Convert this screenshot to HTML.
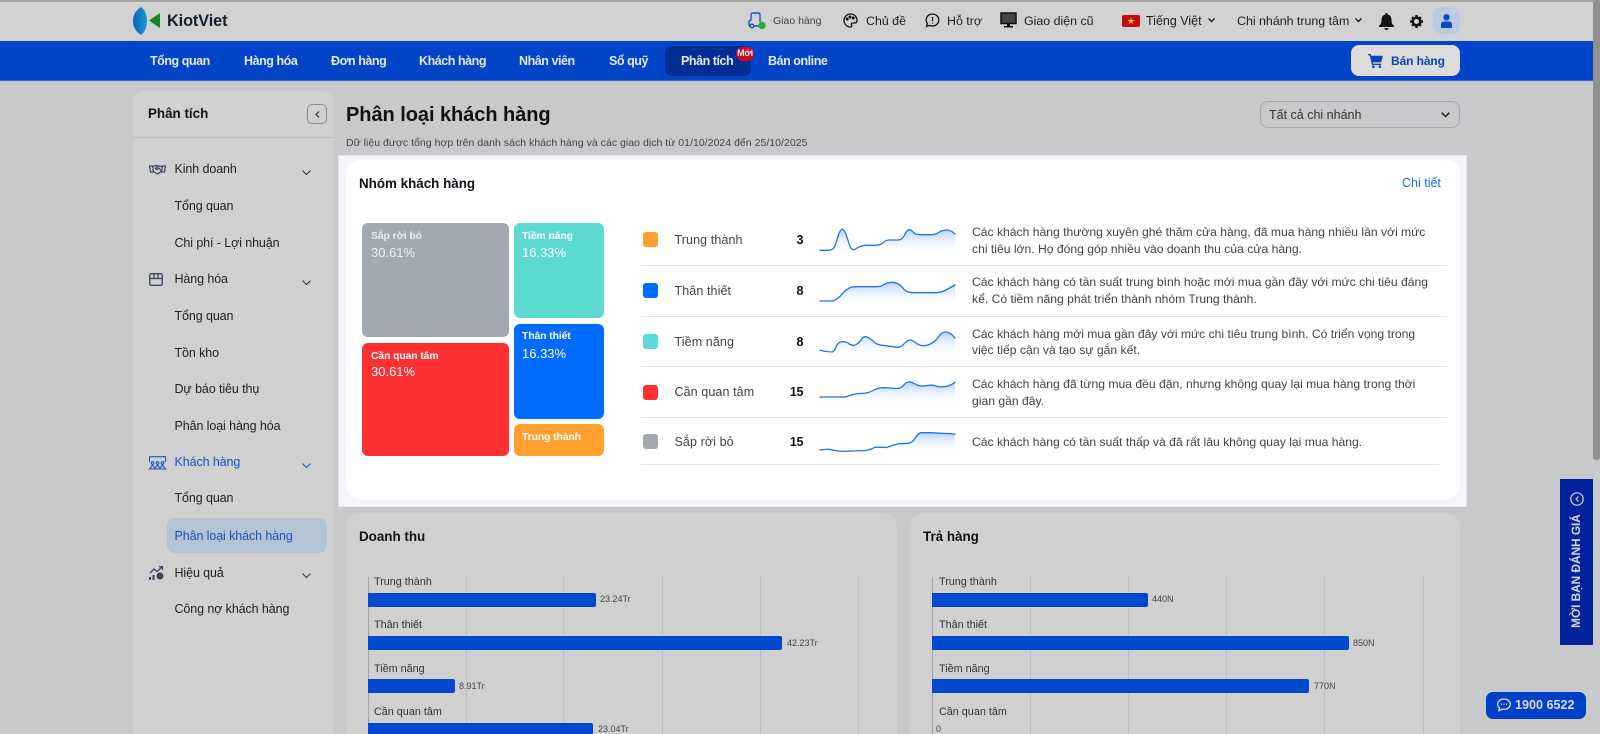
<!DOCTYPE html>
<html lang="vi"><head><meta charset="utf-8"><title>Phân loại khách hàng</title>
<style>
*{box-sizing:border-box}
html,body{margin:0;padding:0;width:1600px;height:734px;overflow:hidden;background:#c8c9cb;font-family:"Liberation Sans",Arial,sans-serif;color:#1e1e1e}
#root{position:relative;width:1600px;height:734px;overflow:hidden;background:#c8c9cb}
.a,.t{position:absolute}
.t{white-space:nowrap;line-height:20px;height:20px;font-size:13px}
.n{color:#e4e8f2;font-weight:bold;font-size:12.5px;letter-spacing:-.45px}
.s{font-size:12.5px;color:#222;letter-spacing:-.1px}
.ti{font-size:13.4px;font-weight:bold;color:#111}
.tm{position:absolute;border-radius:6px}
.l{font-size:10.4px;color:#eee;font-weight:bold;letter-spacing:-.1px}
.p{font-size:13px;color:#eee}
.sq{position:absolute;left:643px;width:15px;height:15px;border-radius:3px}
.name{left:674.5px;color:#444;font-size:12.5px;letter-spacing:.1px}
.cnt{left:760px;width:43px;text-align:right;font-weight:bold;color:#111;font-size:12.5px;letter-spacing:-.4px}
.d{left:972px;font-size:12.15px;color:#444}
.hr{position:absolute;height:1px;background:#e4e4e4;left:641px;width:806px}
.lab{font-size:10.8px;color:#333}
.val{font-size:9px;color:#444}
.bar{position:absolute;height:13.5px;background:#0049cd;border-radius:0 2px 2px 0}
.g{position:absolute;top:577px;height:157px;width:1px;background:#b7c0cf}
svg{position:absolute;overflow:visible}
</style></head><body><div id="root">
<!-- Header -->
<div class="a" style="left:0;top:0;width:1600px;height:41px;background:#d1d1d1;border-top:2px solid #a2a2a2"></div>
<svg style="left:133px;top:7px" width="28" height="28" viewBox="0 0 28 28"><defs><linearGradient id="lg" x1="0" y1="0" x2="1" y2="0"><stop offset="0" stop-color="#0a62b8"/><stop offset="1" stop-color="#1a9ad0"/></linearGradient></defs><path d="M8 0C2 4 0 9 0 14s2 10 8 14c4-3 6-8 6-14S12 3 8 0z" fill="url(#lg)"/><path d="M27 6v15l-11-7.500z" fill="#0f8a22"/></svg>
<div class="t" style="left:167px;top:11px;font-size:16.3px;font-weight:bold;color:#16202c;letter-spacing:-.1px">KiotViet</div>
<svg style="left:748px;top:12px" width="18" height="18" viewBox="0 0 18 18" fill="none" stroke="#1c56b8" stroke-width="1.4"><path d="M1 14V9l2-1V3q0-2 2-2h5q2 0 2 2v7M1 14h10"/><circle cx="4" cy="14" r="1.8" fill="#d1d1d1"/><rect x="11" y="10.500" width="6" height="6" rx="3" fill="#2ca53c" stroke="#2ca53c"/></svg>
<div class="t" style="left:773px;top:11px;font-size:10.5px;color:#444">Giao hàng</div>
<svg style="left:843px;top:13px" width="15" height="15" viewBox="0 0 15 15" fill="none" stroke="#111" stroke-width="1.3"><path d="M7.500 1a6.500 6.500 0 1 0 0 13c1.500 0 1.600-1.200 1-2-.6-1 0-2 1.200-2h2c1.300 0 2.300-.8 2.300-2.300C14 3.500 11 1 7.500 1z"/><circle cx="4.200" cy="6" r=".8" fill="#111"/><circle cx="7" cy="4" r=".8" fill="#111"/><circle cx="10.300" cy="5" r=".8" fill="#111"/></svg>
<div class="t" style="left:866px;top:11px;font-size:12.4px">Chủ đề</div>
<svg style="left:925px;top:13px" width="15" height="15" viewBox="0 0 15 15" fill="none" stroke="#111" stroke-width="1.3"><path d="M7.500 1a6.300 6 0 0 1 0 12c-1 0-2-.2-3-.6L1.500 13.500l.8-3A6 6 0 0 1 7.500 1z"/><path d="M7.500 4v4M7.500 9.500v1"/></svg>
<div class="t" style="left:947px;top:11px;font-size:12.400px">Hỗ trợ</div>
<svg style="left:1000px;top:12px" width="17" height="17" viewBox="0 0 17 17"><rect x="1" y="1" width="15" height="10.500" fill="#444" stroke="#111" stroke-width="1.500"/><path d="M7 12h3v2h3v1.500H4V14h3z" fill="#111"/></svg>
<div class="t" style="left:1024px;top:11px;font-size:12.400px">Giao diện cũ</div>
<div class="a" style="left:1122px;top:15px;width:18px;height:12px;background:#c20a10;border-radius:2px;color:#f5d000;font-size:9px;line-height:12px;text-align:center">★</div>
<div class="t" style="left:1146px;top:11px;font-size:12.500px">Tiếng Việt</div>
<svg style="left:1208px;top:18px" width="7" height="5" fill="none" stroke="#222" stroke-width="1.500"><path d="M.5.500l3 3 3-3"/></svg>
<div class="t" style="left:1237px;top:11px;font-size:12.400px">Chi nhánh trung tâm</div>
<svg style="left:1355px;top:18px" width="7" height="5" fill="none" stroke="#222" stroke-width="1.500"><path d="M.5.500l3 3 3-3"/></svg>
<svg style="left:1379px;top:13px" width="15" height="17" viewBox="0 0 15 17" fill="#111"><path d="M7.500 0a1.300 1.300 0 0 1 1.300 1.500C11.500 2.200 12.500 4.500 12.500 7c0 3 1 4.500 2.500 6v1H0v-1c1.500-1.500 2.500-3 2.500-6 0-2.500 1-4.800 3.700-5.500A1.300 1.300 0 0 1 7.500 0z"/><path d="M5.500 15h4a2 2 0 0 1-4 0z"/></svg>
<svg style="left:1410px;top:15px" width="13" height="13" viewBox="0 0 13 13"><circle cx="6.500" cy="6.500" r="3.800" fill="none" stroke="#111" stroke-width="2.500"/><path d="M5.300 0h2.400v2H5.300zM5.300 11h2.400v2H5.300zM0 5.300h2v2.400H0zM11 5.300h2v2.400h-2zM1.300 3l1.700-1.700 1.300 1.300-1.700 1.700zM8.700 10.400l1.700-1.700 1.300 1.300-1.700 1.700zM10 1.300L11.700 3l-1.300 1.300-1.700-1.700zM3 11.700L1.300 10l1.300-1.300 1.700 1.700z" fill="#111"/></svg>
<div class="a" style="left:1433px;top:7px;width:27px;height:27px;border-radius:9px;background:#bacadf"></div>
<svg style="left:1440px;top:14px" width="13" height="14" viewBox="0 0 13 14" fill="#0a4cc0"><circle cx="6.500" cy="3.300" r="3.200"/><path d="M1 14v-3.500Q1 7.500 4 7.500h5q3 0 3 3V14z"/></svg>
<!-- Nav -->
<div class="a" style="left:0;top:41px;width:1600px;height:40px;background:#0044c8;border-bottom:1px solid #3b68c8"></div>
<div class="a" style="left:665px;top:46px;width:86px;height:30px;border-radius:7px;background:#002e92"></div>
<div class="t n" style="left:150px;top:51px">Tổng quan</div>
<div class="t n" style="left:244px;top:51px">Hàng hóa</div>
<div class="t n" style="left:331px;top:51px">Đơn hàng</div>
<div class="t n" style="left:419px;top:51px">Khách hàng</div>
<div class="t n" style="left:519px;top:51px">Nhân viên</div>
<div class="t n" style="left:609px;top:51px">Sổ quỹ</div>
<div class="t n" style="left:681px;top:51px">Phân tích</div>
<div class="t n" style="left:768px;top:51px">Bán online</div>
<div class="a" style="left:736px;top:47px;width:18px;height:14px;border-radius:7px;background:#cd0a1e;color:#eee;font-size:9px;line-height:13px;text-align:center;font-weight:bold;letter-spacing:-.2px">Mới</div>
<div class="a" style="left:1351px;top:45px;width:109px;height:31px;border-radius:8px;background:#dcdcdc"></div>
<svg style="left:1368px;top:54px" width="15" height="14" viewBox="0 0 17 16" fill="#0a42b8"><path d="M0 0h3l.6 2H17l-2 7.500H5.300l.4 1.500H15v1.500H4.500L2 1.500H0z"/><circle cx="6" cy="14.500" r="1.500"/><circle cx="13.500" cy="14.500" r="1.500"/></svg>
<div class="t" style="left:1391px;top:51px;color:#0a42b8;font-weight:bold;font-size:12px;letter-spacing:-.1px">Bán hàng</div>
<!-- Sidebar -->
<div class="a" style="left:133px;top:91px;width:201px;height:660px;border-radius:12px 12px 0 0;background:#d0d0d0"></div>
<div class="a" style="left:133px;top:137px;width:201px;height:1px;background:#bebebe"></div>
<div class="t ti" style="left:148px;top:104px">Phân tích</div>
<div class="a" style="left:307px;top:104px;width:20px;height:20px;border:1px solid #8e8e8e;border-radius:5px"></div>
<svg style="left:315px;top:111px" width="5" height="7" fill="none" stroke="#333" stroke-width="1.200"><path d="M4 .5L1 3.500l3 3"/></svg>
<div class="a" style="left:167px;top:518px;width:160px;height:35px;border-radius:8px;background:#b6c3d2"></div>
<svg style="left:149px;top:164px" width="17" height="11" viewBox="0 0 17 11" fill="none" stroke="#39465a" stroke-width="1.200" stroke-linejoin="round"><path d="M.5 2h3l1 6h-3zM16.500 2h-3l-1 6h3z"/><path d="M3.700 2.700L7 1.500l2.500.5 3.700.7M4.500 7.300L7 9.300l2 .7 3.500-3"/><path d="M9.500 2L6.500 4.500l1.500 1L10 4l2.500 3"/></svg>
<svg style="left:149px;top:273px" width="14" height="13" viewBox="0 0 14 13" fill="none" stroke="#39465a" stroke-width="1.300"><rect x=".7" y=".7" width="12.600" height="11.600" rx="1.500"/><path d="M.7 5.500h12.600M5 .7v4.800M9 .7v4.800"/></svg>
<svg style="left:149px;top:456px" width="17" height="14" viewBox="0 0 17 14" fill="none" stroke="#1a55c8" stroke-width="1.100"><path d="M.5 6V.7h16V6"/><circle cx="3.500" cy="7" r="1.300"/><circle cx="8.500" cy="7" r="1.300"/><circle cx="13.500" cy="7" r="1.300"/><path d="M.5 13l3-4 3 4zM5.500 13l3-4 3 4zM10.500 13l3-4 3 4z"/></svg>
<svg style="left:149px;top:566px" width="16" height="14" viewBox="0 0 16 14" fill="none" stroke="#39465a" stroke-width="1.300"><path d="M1 7l4-4 3 2.500L13 1M10 .7h3.500v3.300"/><path d="M1 14v-3M4.500 14V9" stroke-width="2"/><circle cx="11" cy="10" r="3.500" fill="#39465a" stroke="none"/></svg>
<svg style="left:302px;top:170px" width="9" height="5" fill="none" stroke="#333" stroke-width="1"><path d="M.5.500l4 4 4-4"/></svg>
<svg style="left:302px;top:280px" width="9" height="5" fill="none" stroke="#333" stroke-width="1"><path d="M.5.500l4 4 4-4"/></svg>
<svg style="left:302px;top:463px" width="9" height="5" fill="none" stroke="#1a55c8" stroke-width="1"><path d="M.5.500l4 4 4-4"/></svg>
<svg style="left:302px;top:573px" width="9" height="5" fill="none" stroke="#333" stroke-width="1"><path d="M.5.500l4 4 4-4"/></svg>
<div class="t s" style="left:174.5px;top:159px">Kinh doanh</div>
<div class="t s" style="left:174.5px;top:196px">Tổng quan</div>
<div class="t s" style="left:174.5px;top:233px">Chi phí - Lợi nhuận</div>
<div class="t s" style="left:174.5px;top:269px">Hàng hóa</div>
<div class="t s" style="left:174.5px;top:306px">Tổng quan</div>
<div class="t s" style="left:174.5px;top:343px">Tồn kho</div>
<div class="t s" style="left:174.5px;top:379px">Dự báo tiêu thụ</div>
<div class="t s" style="left:174.5px;top:416px">Phân loại hàng hóa</div>
<div class="t s" style="left:174.5px;top:452px;color:#1453c8">Khách hàng</div>
<div class="t s" style="left:174.5px;top:488px">Tổng quan</div>
<div class="t s" style="left:174.5px;top:526px;color:#1453c8">Phân loại khách hàng</div>
<div class="t s" style="left:174.5px;top:563px">Hiệu quả</div>
<div class="t s" style="left:174.5px;top:599px">Công nợ khách hàng</div>
<!-- Title -->
<div class="t" style="left:346px;top:105px;font-size:20px;font-weight:bold;color:#111;letter-spacing:-.05px">Phân loại khách hàng</div>
<div class="t" style="left:346px;top:133px;font-size:10.5px;color:#444;letter-spacing:.03px">Dữ liệu được tổng hợp trên danh sách khách hàng và các giao dịch từ 01/10/2024 đến 25/10/2025</div>
<div class="a" style="left:1260px;top:101px;width:200px;height:27px;border:1.500px solid #a4a6aa;border-radius:8px"></div>
<div class="t" style="left:1269px;top:105px;color:#333;font-size:12.5px">Tất cả chi nhánh</div>
<svg style="left:1441px;top:112px" width="9" height="6" fill="none" stroke="#222" stroke-width="1.500"><path d="M.7.700l3.800 3.800 3.800-3.800"/></svg>
<!-- Highlight card -->
<div class="a" style="left:338px;top:155px;width:1129px;height:352px;background:#f5f6f9;border:1px solid #e4e6ea"></div>
<div class="a" style="left:346px;top:160px;width:1114px;height:340px;background:#fff;border-radius:14px"></div>
<div class="t ti" style="left:359px;top:174px;color:#0d1018">Nhóm khách hàng</div>
<div class="t" style="left:1402px;top:173px;color:#1a6ef0;font-size:12.500px">Chi tiết</div>
<div class="tm" style="left:362px;top:223px;width:147px;height:114px;background:#a3a9b3"></div>
<div class="tm" style="left:362px;top:343px;width:147px;height:113px;background:#ff3034"></div>
<div class="tm" style="left:514px;top:223px;width:90px;height:95px;background:#5dd9d3"></div>
<div class="tm" style="left:514px;top:324px;width:90px;height:95px;background:#006bff"></div>
<div class="tm" style="left:514px;top:424px;width:90px;height:32px;background:#ff9f2e"></div>
<div class="t l" style="left:371px;top:227px">Sắp rời bỏ</div>
<div class="t p" style="left:371px;top:243px">30.61%</div>
<div class="t l" style="left:371px;top:347px;color:#fff">Cần quan tâm</div>
<div class="t p" style="left:371px;top:362px;color:#fff">30.61%</div>
<div class="t l" style="left:522px;top:227px;color:#fff">Tiềm năng</div>
<div class="t p" style="left:522px;top:243px;color:#fff">16.33%</div>
<div class="t l" style="left:522px;top:327px;color:#fff">Thân thiết</div>
<div class="t p" style="left:522px;top:344px;color:#fff">16.33%</div>
<div class="t l" style="left:522px;top:428px;color:#fff">Trung thành</div>
<!-- Legend -->
<div class="sq" style="top:232px;background:#ff9f2e"></div>
<div class="sq" style="top:283px;background:#006bff"></div>
<div class="sq" style="top:334px;background:#5dd9d3"></div>
<div class="sq" style="top:385px;background:#ff3034"></div>
<div class="sq" style="top:434px;background:#a3a9b3"></div>
<div class="t name" style="top:230px">Trung thành</div>
<div class="t name" style="top:281px">Thân thiết</div>
<div class="t name" style="top:332px">Tiềm năng</div>
<div class="t name" style="top:382px">Cần quan tâm</div>
<div class="t name" style="top:432px">Sắp rời bỏ</div>
<div class="t cnt" style="top:230px">3</div>
<div class="t cnt" style="top:281px">8</div>
<div class="t cnt" style="top:332px">8</div>
<div class="t cnt" style="top:382px">15</div>
<div class="t cnt" style="top:432px">15</div>
<svg style="left:0;top:0" width="1600" height="734" fill="none">
<defs><linearGradient id="sg" x1="0" y1="0" x2="0" y2="1"><stop offset="0" stop-color="#b5d1fb"/><stop offset="1" stop-color="#fff" stop-opacity="0"/></linearGradient></defs>
<g stroke-linejoin="round" stroke-linecap="round">
<path fill="url(#sg)" d="M820 250.300L828 250.300Q831 250.300 833 248.600Q835 247 836.500 241.500Q838 236 839.500 232.500Q841 229 842.500 229.200Q844 229.500 845.500 233Q847 237 848.500 242Q850 247 851.500 248.700Q853 250.500 855.500 249Q858 247.500 860.500 246.400Q863 245.300 866 245.300L875 245.300Q880 245.300 883 243Q885 240 890 240L898 240Q902 240 904 236Q907 230 909 229.700Q911 229.700 913 232Q915 234.700 920 234.700L931 234.700Q936 234.700 940 231.500Q944 229.800 948 230Q952 231 955 234V255H820Z"/>
<path stroke="#1a75f0" stroke-width="1.300" d="M820 250.300L828 250.300Q831 250.300 833 248.600Q835 247 836.500 241.500Q838 236 839.500 232.500Q841 229 842.500 229.200Q844 229.500 845.500 233Q847 237 848.500 242Q850 247 851.500 248.700Q853 250.500 855.500 249Q858 247.500 860.500 246.400Q863 245.300 866 245.300L875 245.300Q880 245.300 883 243Q885 240 890 240L898 240Q902 240 904 236Q907 230 909 229.700Q911 229.700 913 232Q915 234.700 920 234.700L931 234.700Q936 234.700 940 231.500Q944 229.800 948 230Q952 231 955 234"/>
<path fill="url(#sg)" d="M820 301L832 301Q835 301 840 296.500Q847 288 852 287Q853 286.700 856 286.700L877 286.700Q881 286.700 885 284Q889 282.200 893 282.300Q898 282.800 902 287Q906 292.700 912 292.700L935 292.700Q941 292.700 946 290L955 285V305H820Z"/>
<path stroke="#1a75f0" stroke-width="1.300" d="M820 301L832 301Q835 301 840 296.500Q847 288 852 287Q853 286.700 856 286.700L877 286.700Q881 286.700 885 284Q889 282.200 893 282.300Q898 282.800 902 287Q906 292.700 912 292.700L935 292.700Q941 292.700 946 290L955 285"/>
<path fill="url(#sg)" d="M820 350.300Q826 352 832 352Q834 352 836 347Q838 342 842 341.700Q847 341.500 850 344.500Q853 346 856 344.700Q860 342 862 338.500Q864 336 867 337Q870 338 875 342.800Q878 345 884 345.500L897 347.300Q900 347.500 903 345Q907 340 910 340Q913 340.500 916 343Q920 346 924 345.800Q930 345 935 341Q938 338 940 335Q942 332 946 332Q950 332 955 338V356H820Z"/>
<path stroke="#1a75f0" stroke-width="1.300" d="M820 350.300Q826 352 832 352Q834 352 836 347Q838 342 842 341.700Q847 341.500 850 344.500Q853 346 856 344.700Q860 342 862 338.500Q864 336 867 337Q870 338 875 342.800Q878 345 884 345.500L897 347.300Q900 347.500 903 345Q907 340 910 340Q913 340.500 916 343Q920 346 924 345.800Q930 345 935 341Q938 338 940 335Q942 332 946 332Q950 332 955 338"/>
<path fill="url(#sg)" d="M820 397L846 397Q850 395 855 394L866 393Q871 392 875 389.500Q879 387.700 884 387.700L896 388.500Q900 388.700 903 386Q906 382 909 382Q912 382 915 384Q919 386.300 923 386L932 385Q939 387.500 945 386.700Q950 386 955 382.300V405H820Z"/>
<path stroke="#1a75f0" stroke-width="1.300" d="M820 397L846 397Q850 395 855 394L866 393Q871 392 875 389.500Q879 387.700 884 387.700L896 388.500Q900 388.700 903 386Q906 382 909 382Q912 382 915 384Q919 386.300 923 386L932 385Q939 387.500 945 386.700Q950 386 955 382.300"/>
<path fill="url(#sg)" d="M820 450Q825 449 829 449.300L838 451Q845 451.500 852 451L866 450.500Q871 449.500 875 447.300Q881 447 887 447.500Q893 445 899 443.800L908 443.300Q912 443 915 438.500Q918 433 921 432.700L930 432.700L955 434V453H820Z"/>
<path stroke="#1a75f0" stroke-width="1.300" d="M820 450Q825 449 829 449.300L838 451Q845 451.500 852 451L866 450.500Q871 449.500 875 447.300Q881 447 887 447.500Q893 445 899 443.800L908 443.300Q912 443 915 438.500Q918 433 921 432.700L930 432.700L955 434"/>
</g></svg>
<div class="t d" style="top:222px">Các khách hàng thường xuyên ghé thăm cửa hàng, đã mua hàng nhiều lần với mức</div>
<div class="t d" style="top:239px">chi tiêu lớn. Họ đóng góp nhiều vào doanh thu của cửa hàng.</div>
<div class="t d" style="top:272px">Các khách hàng có tần suất trung bình hoặc mới mua gần đây với mức chi tiêu đáng</div>
<div class="t d" style="top:289px">kể. Có tiềm năng phát triển thành nhóm Trung thành.</div>
<div class="t d" style="top:324px">Các khách hàng mới mua gần đây với mức chi tiêu trung bình. Có triển vọng trong</div>
<div class="t d" style="top:340px">việc tiếp cận và tạo sự gắn kết.</div>
<div class="t d" style="top:374px">Các khách hàng đã từng mua đều đặn, nhưng không quay lại mua hàng trong thời</div>
<div class="t d" style="top:391px">gian gần đây.</div>
<div class="t d" style="top:432px">Các khách hàng có tần suất thấp và đã rất lâu không quay lại mua hàng.</div>
<div class="hr" style="top:265px"></div>
<div class="hr" style="top:316px"></div>
<div class="hr" style="top:366px"></div>
<div class="hr" style="top:417px"></div>
<div class="hr" style="top:464px;left:641px;width:798px"></div>
<!-- Lower cards -->
<div class="a" style="left:346px;top:513px;width:551px;height:240px;background:#d0d0d0;border-radius:14px"></div>
<div class="a" style="left:910px;top:513px;width:550px;height:240px;background:#d0d0d0;border-radius:14px"></div>
<div class="t ti" style="left:359px;top:527px">Doanh thu</div>
<div class="t ti" style="left:923px;top:527px">Trả hàng</div>
<div class="g" style="left:368px;background:#a0a3a8"></div><div class="g" style="left:466px"></div><div class="g" style="left:563px"></div><div class="g" style="left:662px"></div><div class="g" style="left:760px"></div><div class="g" style="left:858px"></div>
<div class="g" style="left:932px;background:#a0a3a8"></div><div class="g" style="left:1030px"></div><div class="g" style="left:1128px"></div><div class="g" style="left:1226px"></div><div class="g" style="left:1324px"></div><div class="g" style="left:1423px"></div>
<div class="bar" style="left:368px;top:593px;width:228px"></div>
<div class="bar" style="left:368px;top:636px;width:414px"></div>
<div class="bar" style="left:368px;top:679px;width:87px"></div>
<div class="bar" style="left:368px;top:723px;width:225px"></div>
<div class="bar" style="left:932px;top:593px;width:216px"></div>
<div class="bar" style="left:932px;top:636px;width:417px"></div>
<div class="bar" style="left:932px;top:679px;width:377px"></div>
<div class="t lab" style="left:374px;top:572px">Trung thành</div>
<div class="t lab" style="left:374px;top:615px">Thân thiết</div>
<div class="t lab" style="left:374px;top:659px">Tiềm năng</div>
<div class="t lab" style="left:374px;top:702px">Cần quan tâm</div>
<div class="t lab" style="left:939px;top:572px">Trung thành</div>
<div class="t lab" style="left:939px;top:615px">Thân thiết</div>
<div class="t lab" style="left:939px;top:659px">Tiềm năng</div>
<div class="t lab" style="left:939px;top:702px">Cần quan tâm</div>
<div class="t val" style="left:600px;top:589px">23.24Tr</div>
<div class="t val" style="left:787px;top:633px">42.23Tr</div>
<div class="t val" style="left:459px;top:676px">8.91Tr</div>
<div class="t val" style="left:598px;top:719px">23.04Tr</div>
<div class="t val" style="left:1152px;top:589px">440N</div>
<div class="t val" style="left:1353px;top:633px">850N</div>
<div class="t val" style="left:1314px;top:676px">770N</div>
<div class="t val" style="left:936px;top:719px">0</div>
<!-- Right widgets -->
<div class="a" style="left:1593px;top:0;width:7px;height:460px;background:#8f9092;border-radius:4px"></div>
<div class="a" style="left:1560px;top:479px;width:33px;height:166px;background:#00229c"></div>
<div class="t" style="left:1516px;top:561px;width:120px;text-align:center;transform:rotate(-90deg);color:#d4d8e6;font-weight:bold;font-size:11.8px">MỜI BẠN ĐÁNH GIÁ</div>
<svg style="left:1570px;top:492px" width="14" height="14" fill="none" stroke="#d4d8e6" stroke-width="1.200"><circle cx="7" cy="7" r="6.200"/><path d="M8.500 4.500L6 7l2.500 2.500"/></svg>
<div class="a" style="left:1486px;top:692px;width:100px;height:27px;border-radius:7px;background:#0040c8"></div>
<svg style="left:1497px;top:698px" width="14" height="14" viewBox="0 0 14 14" fill="none" stroke="#d8dce8" stroke-width="1.300"><path d="M7 1c3.500 0 6.300 2.300 6.300 5.200S10.500 11.400 7 11.400c-.7 0-1.400-.1-2-.3L2 12.800l.5-3C1.300 8.900.7 7.600.7 6.200.7 3.300 3.500 1 7 1z"/><path d="M4 6.200h1M6.500 6.200h1M9 6.200h1" stroke-width="1.500"/></svg>
<div class="t" style="left:1515px;top:695px;color:#d8dce8;font-weight:bold;font-size:12.6px">1900 6522</div>
</div></body></html>
